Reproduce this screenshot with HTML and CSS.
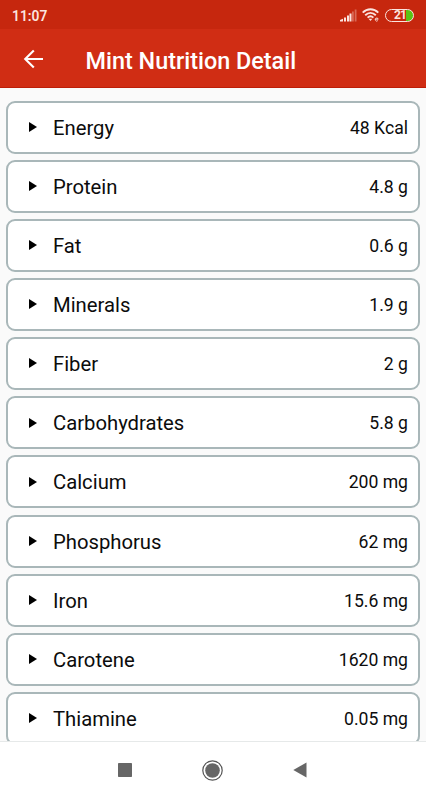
FILE: index.html
```html
<!DOCTYPE html>
<html lang="en">
<head>
  <meta charset="UTF-8">
  <meta name="viewport" content="width=device-width, initial-scale=1.0">
  <title>Mint Nutrition Detail</title>
  <link rel="stylesheet" href="styles.css">
</head>
<body>
  <div class="status-bar">
    <span class="time">11:07</span>
    <div class="status-icons">
      <svg class="signal" width="17" height="13" viewBox="0 0 17 13" fill="#fbe4df">
        <path d="M0 12.5V11L3 9.8V12.5Z"/>
        <rect x="4" y="8.5" width="2" height="4"/>
        <rect x="7" y="6.5" width="2" height="6"/>
        <rect x="9.5" y="4.5" width="2" height="8"/>
        <rect x="12" y="2.5" width="1.8" height="10" opacity="0.35"/>
        <rect x="14.7" y="0.5" width="1.8" height="12" opacity="0.35"/>
      </svg>
      <svg class="wifi" width="18" height="14" viewBox="0 0 18 14" fill="none" stroke="#fbe4df" stroke-width="1.9">
        <path d="M0.7 4.6C5.2 0.2 11.8 0.2 16.3 4.6"/>
        <path d="M3.2 7.2C6.4 4.2 10.6 4.2 13.8 7.2"/>
        <path d="M5.6 9.6C7.4 8 9.6 8 11.4 9.6"/>
        <path d="M6.6 10.7L8.5 13L10.4 10.7Z" fill="#fbe4df" stroke="none"/>
        <path d="M13.3 11.2H16.2A1.5 1.5 0 1 0 15.8 12.6" stroke-width="0.9"/>
      </svg>
      <div class="battery">21</div>
    </div>
  </div>

  <div class="toolbar">
    <svg class="back" width="20" height="20" viewBox="0 0 20 20" fill="none" stroke="#fff" stroke-width="2.1">
      <path d="M20 10H2.2M10.8 1.4L2.2 10L10.8 18.6"/>
    </svg>
    <h1>Mint Nutrition Detail</h1>
  </div>

  <div class="list">
    <div class="item"><span class="arrow"></span><span class="name">Energy</span><span class="value">48 Kcal</span></div>
    <div class="item"><span class="arrow"></span><span class="name">Protein</span><span class="value">4.8 g</span></div>
    <div class="item"><span class="arrow"></span><span class="name">Fat</span><span class="value">0.6 g</span></div>
    <div class="item"><span class="arrow"></span><span class="name">Minerals</span><span class="value">1.9 g</span></div>
    <div class="item"><span class="arrow"></span><span class="name">Fiber</span><span class="value">2 g</span></div>
    <div class="item"><span class="arrow"></span><span class="name">Carbohydrates</span><span class="value">5.8 g</span></div>
    <div class="item"><span class="arrow"></span><span class="name">Calcium</span><span class="value">200 mg</span></div>
    <div class="item"><span class="arrow"></span><span class="name">Phosphorus</span><span class="value">62 mg</span></div>
    <div class="item"><span class="arrow"></span><span class="name">Iron</span><span class="value">15.6 mg</span></div>
    <div class="item"><span class="arrow"></span><span class="name">Carotene</span><span class="value">1620 mg</span></div>
    <div class="item"><span class="arrow"></span><span class="name">Thiamine</span><span class="value">0.05 mg</span></div>
  </div>

  <div class="nav-bar">
    <svg width="14" height="14" viewBox="0 0 14 14">
      <rect width="14" height="14" rx="0.7" fill="#666"/>
    </svg>
    <svg width="21" height="21" viewBox="0 0 21 21">
      <circle cx="10.5" cy="10.5" r="9.7" fill="none" stroke="#555" stroke-width="1.2"/>
      <circle cx="10.5" cy="10.5" r="7.3" fill="#666"/>
    </svg>
    <svg width="14" height="16" viewBox="0 0 14 16">
      <path d="M0.3 8L13.5 0.5V15.5Z" fill="#666"/>
    </svg>
  </div>
</body>
</html>
```

FILE: styles.css
```css
* {
  box-sizing: border-box;
}
body {
  font-family: Roboto, sans-serif;
  margin: 0;
  height: 800px;
  display: flex;
  flex-direction: column;
  overflow: hidden;
  background-color: #fafafa;
  color: #0c0c0c;
}
.status-bar {
  flex: none;
  height: 29px;
  padding: 1px 12px 0;
  display: flex;
  align-items: center;
  justify-content: space-between;
  background-color: #c6270e;
  color: #fbe4df;
}
.time {
  padding-top: 1px;
  font-size: 13.8px;
  font-weight: 600;
}
.status-icons {
  display: flex;
  align-items: center;
}
.wifi {
  margin-left: 5px;
}
.battery {
  width: 29px;
  height: 13px;
  margin-left: 5px;
  border: 1.5px solid #fbe4df;
  border-radius: 7px;
  background: linear-gradient(to right, transparent 20px, #58c414 20px);
  font-size: 12px;
  font-weight: 700;
  line-height: 11px;
  letter-spacing: -0.8px;
  padding-left: 8px;
}
.toolbar {
  flex: none;
  height: 59px;
  padding: 2px 23px 0;
  display: flex;
  align-items: center;
  background-color: #d02d14;
  border-bottom: 1px solid #bd1e08;
  color: #fff;
}
.toolbar h1 {
  margin: 3px 0 0 42.5px;
  font-size: 23.4px;
  font-weight: 500;
}
.list {
  flex: 1;
  min-height: 0;
  overflow: hidden;
  padding: 12.6px 6px 0;
}
.item {
  height: 53px;
  margin-bottom: 6.15px;
  padding: 1px 10px 0 21px;
  display: flex;
  align-items: center;
  background-color: #fff;
  border: 2px solid #a9b7b9;
  border-radius: 9px;
}
.arrow {
  margin-bottom: 1.5px;
  border-left: 8px solid #000;
  border-top: 5px solid transparent;
  border-bottom: 5px solid transparent;
}
.name {
  margin-left: 16px;
  font-size: 20.25px;
}
.value {
  margin-left: auto;
  font-size: 17.6px;
}
.nav-bar {
  flex: none;
  height: 59px;
  padding: 0 2px 2px 0;
  display: flex;
  align-items: center;
  justify-content: center;
  gap: 70px;
  background-color: #fff;
  border-top: 1px solid #e6e9e9;
}
```
